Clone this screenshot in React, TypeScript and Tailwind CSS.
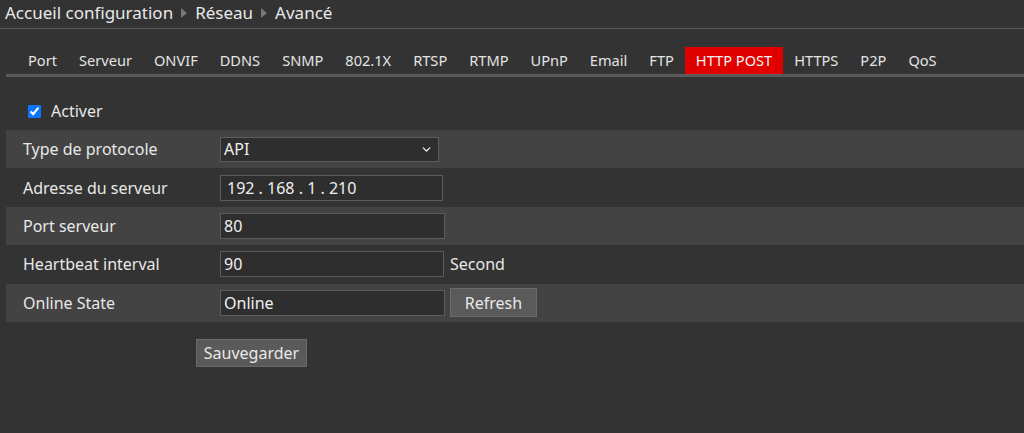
import { ChevronDown } from 'lucide-react'

const tabs = ['Port', 'Serveur', 'ONVIF', 'DDNS', 'SNMP', '802.1X', 'RTSP', 'RTMP', 'UPnP', 'Email', 'FTP', 'HTTP POST', 'HTTPS', 'P2P', 'QoS']

function Field({ value, className = '' }: { value: string; className?: string }) {
  return (
    <div className={`flex h-[26px] items-center border border-[#5c5c5c] bg-[#2e2e2e] px-[3px] text-[16px] text-[#f0f0f0] ${className}`}>
      {value}
    </div>
  )
}

function Row({ label, light, children }: { label: string; light: boolean; children: React.ReactNode }) {
  return (
    <div className={`flex h-[38.4px] items-center ${light ? 'bg-[#434343]' : 'bg-[#333333]'}`}>
      <div className="w-[214px] pl-[17px] text-[16px] text-[#e8e8e8]">{label}</div>
      {children}
    </div>
  )
}

function Arrow() {
  return <span className="mx-[8px] inline-block h-0 w-0 border-y-[5px] border-l-[6px] border-y-transparent border-l-[#777777]" />
}

export default function App() {
  return (
    <div className="h-[433px] w-full overflow-hidden bg-[#333333] font-['Noto_Sans','Open_Sans',sans-serif] text-[#e8e8e8]">
      <div className="flex h-[29px] items-center border-b border-[#5a5a5a] pb-[2px] pl-[5px] text-[17px]">
        <span>Accueil configuration</span>
        <Arrow />
        <span>Réseau</span>
        <Arrow />
        <span>Avancé</span>
      </div>

      <div className="ml-[6px] mt-[18px] flex border-b-[3px] border-[#5a5a5a] pl-[11px]">
        {tabs.map((tab) => (
          <div
            key={tab}
            className={`flex h-[27px] items-center px-[11px] pt-[1px] text-[14.6px] ${tab === 'HTTP POST' ? 'bg-[#e00000] text-[#f4f4f4]' : 'text-[#e4e4e4]'}`}
          >
            {tab}
          </div>
        ))}
      </div>

      <label className="ml-[28px] mt-[26px] flex h-[16px] items-center gap-[10px] text-[16px]">
        <input type="checkbox" defaultChecked className="m-0 size-[13px] accent-[#0a75ff]" />
        Activer
      </label>

      <div className="ml-[6px] mt-[11px]">
        <Row label="Type de protocole" light>
          <div className="flex h-[25px] w-[219px] items-center justify-between border border-[#5c5c5c] bg-[#2e2e2e] px-[3px] text-[16px] text-[#f0f0f0]">
            API
            <ChevronDown className="mr-[2px] size-[13px]" strokeWidth={2.5} />
          </div>
        </Row>
        <Row label="Adresse du serveur" light={false}>
          <Field value="192 . 168 . 1 . 210" className="w-[223px] pl-[6px]" />
        </Row>
        <Row label="Port serveur" light>
          <Field value="80" className="w-[225px]" />
        </Row>
        <Row label="Heartbeat interval" light={false}>
          <Field value="90" className="w-[224px]" />
          <span className="ml-[6px] text-[16px]">Second</span>
        </Row>
        <Row label="Online State" light>
          <Field value="Online" className="w-[225px]" />
          <button className="ml-[5px] h-[29px] w-[87px] border border-[#6a6a6a] bg-[#5a5a5a] text-[16px] text-[#e8e8e8]">Refresh</button>
        </Row>
      </div>

      <button className="ml-[196px] mt-[17px] h-[28px] w-[111px] border border-[#6a6a6a] bg-[#5a5a5a] text-[16px] text-[#e8e8e8]">
        Sauvegarder
      </button>
    </div>
  )
}
